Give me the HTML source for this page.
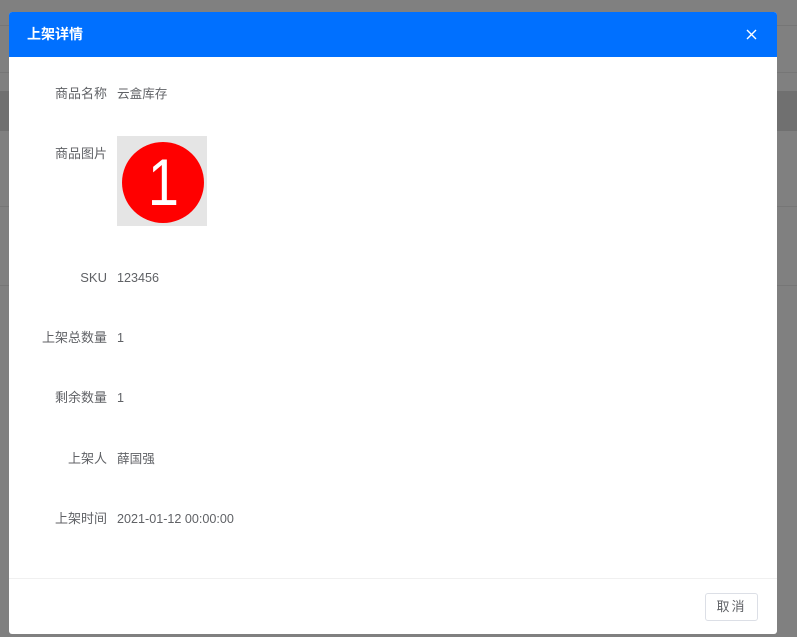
<!DOCTYPE html>
<html><head><meta charset="utf-8"><style>
body{margin:0;width:797px;height:637px;background:#808080;position:relative;overflow:hidden;font-family:"Liberation Sans","Noto Sans CJK SC",sans-serif}
.l{position:absolute;left:0;width:797px;height:1px;background:#767676}
.m{position:absolute;left:9px;top:12px;width:768px;height:622px;background:#fff;border-radius:3px;overflow:hidden}
.h{height:45px;background:#0070ff;color:#fff;font-weight:bold;font-size:14px;line-height:45px;padding-left:18px;position:relative}
.x{position:absolute;right:20px;top:17px;width:11px;height:11px}
.r{position:absolute;left:0;width:768px;font-size:13px;color:#555;height:20px;line-height:20px}
.r .k{position:absolute;right:670px;text-align:right;white-space:nowrap;color:#606266}
.r .v{position:absolute;left:108px;color:#606266;font-size:12.6px}
.f{position:absolute;left:0;top:566px;width:768px;border-top:1px solid #f0f0f0}
.b{position:absolute;left:696px;top:581px;width:53px;height:28px;border:1px solid #dcdfe6;border-radius:3px;font-size:13px;color:#606266;text-align:center;line-height:26px;box-sizing:border-box;letter-spacing:2px}
</style></head><body>
<div class="l" style="top:25px"></div>
<div class="l" style="top:72px"></div>
<div style="position:absolute;left:0;top:91px;width:797px;height:40px;background:#707070"></div>
<div class="l" style="top:206px"></div>
<div class="l" style="top:285px"></div>
<div class="m">
<div class="h">上架详情<svg class="x" viewBox="0 0 11 11"><path d="M1 1L10 10M10 1L1 10" stroke="#fff" stroke-width="1.4"/></svg></div>
<div class="r" style="top:72px"><span class="k">商品名称</span><span class="v">云盒库存</span></div>
<div class="r" style="top:132px"><span class="k">商品图片</span></div>
<div style="position:absolute;left:108px;top:124px;width:90px;height:90px;background:#e5e5e5">
<div style="position:absolute;left:5px;top:6px;width:82px;height:81px;border-radius:50%;background:#ff0000;color:#fff;font-size:66px;line-height:81px;text-align:center;font-family:'Liberation Sans',sans-serif"><span style="display:inline-block;transform:scaleX(0.85)">1</span></div></div>
<div class="r" style="top:256px"><span class="k">SKU</span><span class="v">123456</span></div>
<div class="r" style="top:316px"><span class="k">上架总数量</span><span class="v">1</span></div>
<div class="r" style="top:376px"><span class="k">剩余数量</span><span class="v">1</span></div>
<div class="r" style="top:437px"><span class="k">上架人</span><span class="v">薛国强</span></div>
<div class="r" style="top:497px"><span class="k">上架时间</span><span class="v">2021-01-12 00:00:00</span></div>
<div class="f"></div>
<div class="b">取消</div>
</div>
</body></html>
